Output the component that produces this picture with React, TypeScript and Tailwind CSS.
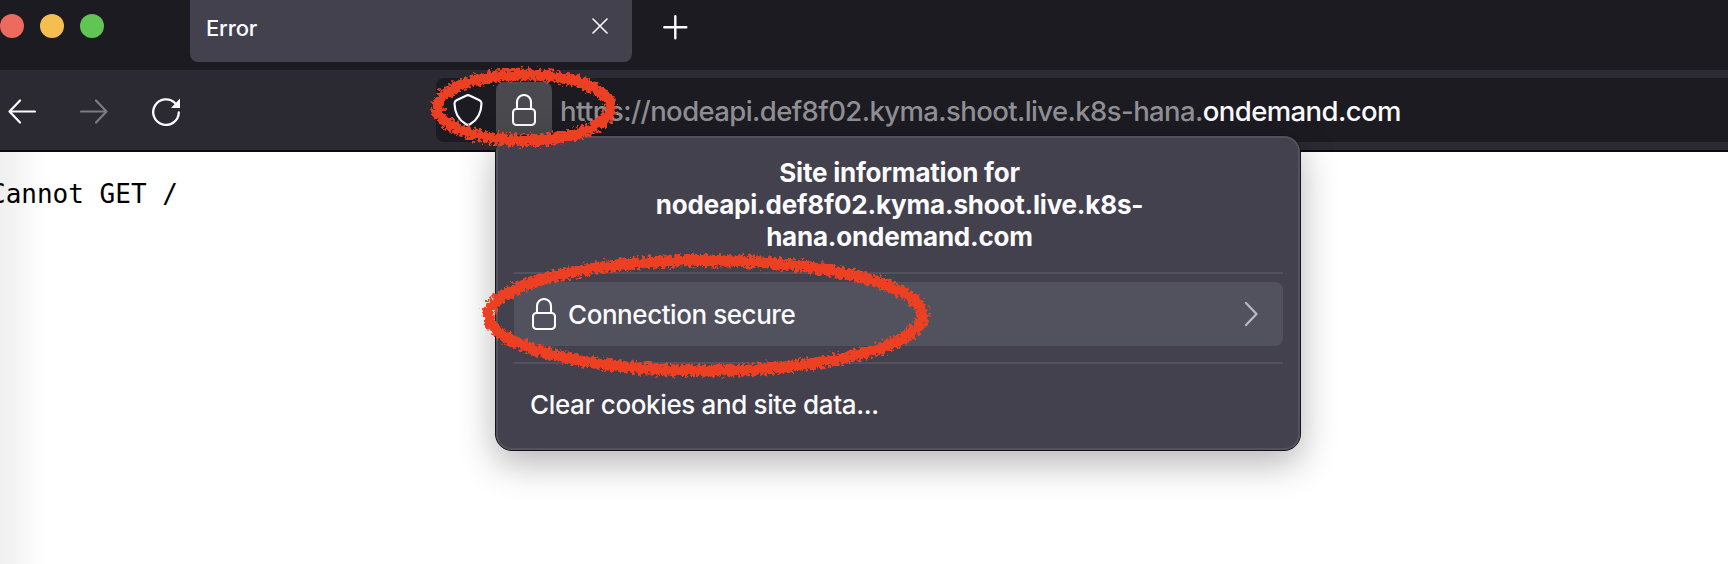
import React from "react";

function LockIcon() {
  return (
    <svg className="block shrink-0" width="24" height="32" viewBox="0 0 24 32" fill="none" stroke="#fbfbfe" strokeWidth="2.1">
      <rect x="1" y="15" width="22" height="16" rx="3.5" />
      <path d="M5 15V8a7 7 0 0 1 14 0v7" />
    </svg>
  );
}

function Brush({ className, width, height, seed }: { className: string; width: number; height: number; seed: number }) {
  const id = "rough" + seed;
  const rx = width / 2 - 6.5;
  const ry = height / 2 - 6.5;
  return (
    <svg className={className} width={width} height={height} overflow="visible" fill="none">
      <filter id={id} x="-10%" y="-20%" width="120%" height="140%">
        <feTurbulence type="fractalNoise" baseFrequency="0.3" numOctaves="4" seed={seed} result="noise" />
        <feDisplacementMap in="SourceGraphic" in2="noise" scale="11" xChannelSelector="R" yChannelSelector="G" />
      </filter>
      <ellipse cx={width / 2} cy={height / 2} rx={rx} ry={ry} stroke="#ed4024" strokeWidth="11.5" filter={`url(#${id})`} />
    </svg>
  );
}

export default function App() {
  return (
    <div className="relative h-[564px] w-[1728px] overflow-hidden bg-white font-['Inter',sans-serif] text-[#fbfbfe]">
      <header className="flex h-[70px] items-start bg-[#1c1b22]">
        <div className="flex gap-4 pt-3.5">
          <span className="size-6 rounded-full bg-[#ed6a5e]" />
          <span className="size-6 rounded-full bg-[#f5bf4f]" />
          <span className="size-6 rounded-full bg-[#61c554]" />
        </div>
        <div className="ml-[86px] flex h-[62px] w-[442px] items-center justify-between rounded-b-lg bg-[#42414d] pr-6 pl-4">
          <span className="pb-1.5 text-[22px] leading-7 font-[450] tracking-[-0.15px]">Error</span>
          <svg className="mb-2.5 block" width="16" height="16" fill="none" stroke="#fbfbfe" strokeWidth="1.6" strokeLinecap="round">
            <path d="M1 1l14 14M15 1L1 15" />
          </svg>
        </div>
        <svg className="mt-[15px] ml-[31px] block" width="25" height="25" fill="none" stroke="#fbfbfe" strokeWidth="2.4" strokeLinecap="round">
          <path d="M12.3 1.2v22M1.3 12.2h22" />
        </svg>
      </header>

      <nav className="flex h-[82px] items-center border-b-2 border-[#0c0c0d] bg-[#2b2a33]">
        <div className="flex w-[436px] items-center pt-[3px] pl-[7.5px]">
          <svg className="block" width="28" height="26" fill="none" stroke="#fbfbfe" strokeWidth="2.2" strokeLinecap="round" strokeLinejoin="round">
            <path d="M12 1.5L1.5 12.5L12 23.5M1.5 12.5H27" />
          </svg>
          <svg className="ml-11 block" width="28" height="26" fill="none" stroke="#7c7b80" strokeWidth="2.2" strokeLinecap="round" strokeLinejoin="round">
            <path d="M16 1.5L26.5 12.5L16 23.5M26.5 12.5H1" />
          </svg>
          <svg className="ml-11 block" width="28" height="28" fill="none" stroke="#fbfbfe" strokeWidth="2.3">
            <path d="M26.8 14.5A12.8 12.8 0 1 1 23 5" strokeLinecap="round" />
            <path d="M28 0.5V10H19Z" fill="#fbfbfe" stroke="none" />
          </svg>
        </div>
        <div className="flex h-16 flex-1 items-center rounded-l-lg bg-[#1c1b22] pl-[17px]">
          <svg className="block" width="30" height="32" fill="none" stroke="#fbfbfe" strokeWidth="2.2" strokeLinejoin="round">
            <path d="M15 1.2Q16 1.2 17 1.8L26.5 6.2Q28.5 7.2 28.5 9.5C28.3 18 24.5 26 17 30.3Q15 31.3 13 30.3C5.5 26 1.700 18 1.5 9.500Q1.5 7.2 3.5 6.2L13 1.8Q14 1.2 15 1.2Z" />
          </svg>
          <span className="ml-[13px] flex h-14 w-14 items-center justify-center rounded-lg bg-[#4a4a4e]">
            <LockIcon />
          </span>
          <span className="ml-2 pt-0.5 text-[27.5px] leading-8 font-[450] tracking-[-0.6px] whitespace-nowrap text-[#8f8f94]">
            https://nodeapi.def8f02.kyma.shoot.live.k8s-hana.<span className="text-[#fbfbfe]">ondemand.com</span>
          </span>
        </div>
      </nav>

      <main className="flex h-[412px] bg-linear-to-r from-[#efefef] to-white to-[46px] pt-[26px]">
        <pre className="-ml-[10px] font-['DejaVu_Sans_Mono',monospace] text-[26px] leading-8 text-black">Cannot GET /</pre>
      </main>

      <section className="absolute top-[135px] left-[495px] h-[316px] w-[806px] rounded-[17px] border border-[#151419] bg-[#42414d] shadow-[0_12px_36px_rgba(12,0,12,0.3)]">
        <div className="flex h-full flex-col rounded-2xl border-2 border-[#52515e] pr-[15px] pl-4">
          <h1 className="pt-[19px] pl-0.5 text-center text-[26px] leading-8 font-bold tracking-[-0.21px] whitespace-nowrap">
            Site information for<br />nodeapi.def8f02.kyma.shoot.live.k8s-<br />hana.ondemand.com
          </h1>
          <div className="mt-[19px] h-0.5 bg-[#52525e]" />
          <div className="mt-2 flex h-16 items-center rounded-lg bg-[#52525e] pr-[25px] pl-[18px]">
            <LockIcon />
            <span className="ml-3 pt-0.5 text-[26px] leading-8 font-[450] tracking-[-0.44px]">Connection secure</span>
            <svg className="ml-auto block" width="14" height="26" fill="none" stroke="#b8b8bf" strokeWidth="2.3" strokeLinecap="round" strokeLinejoin="round">
              <path d="M2 2L12.5 13L2 24" />
            </svg>
          </div>
          <div className="mt-4 h-0.5 bg-[#52525e]" />
          <div className="mt-[25px] pl-4 text-[26px] leading-8 font-[450] tracking-[-0.36px]">Clear cookies and site data...</div>
        </div>
      </section>

      <Brush className="absolute top-[68px] left-[431px]" width={186} height={79} seed={3} />
      <Brush className="absolute top-[254px] left-[482px]" width={447} height={123} seed={8} />
    </div>
  );
}
